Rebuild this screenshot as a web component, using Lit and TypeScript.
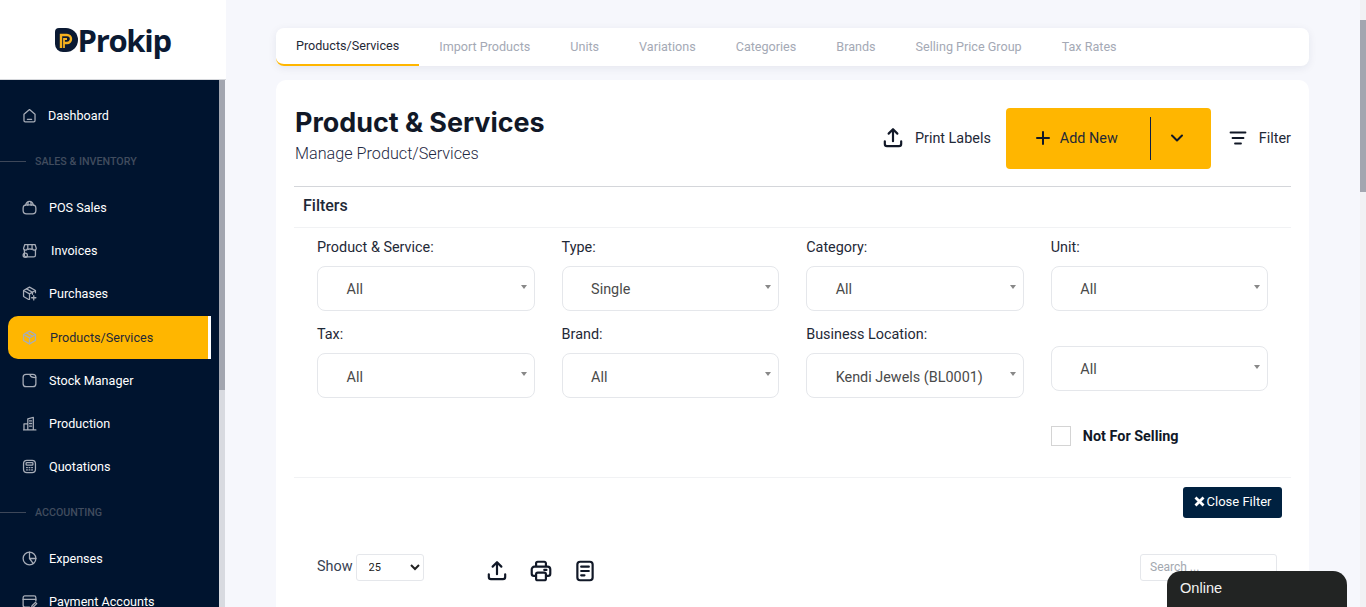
import { LitElement, html, css, svg } from "lit";
import { customElement } from "lit/decorators.js";

const icons: Record<string, unknown> = {
  home: svg`<path d="M3.5 8.5 10 3l6.500 5.500V16a1.500 1.500 0 0 1-1.500 1.500H5A1.500 1.500 0 0 1 3.500 16z"/><path d="M7.500 14.500h5"/>`,
  pos: svg`<rect x="2.500" y="7" width="15" height="10.500" rx="4"/><path d="M5.500 7.500C6 4 8 2.800 10 2.800s4 1.200 4.500 4.700M8 7.500 8.500 3M12 7.500 11.500 3"/>`,
  inv: svg`<path d="M4 9v6.500A2 2 0 0 0 6 17.500h9a2 2 0 0 0 2-2V9"/><path d="M3 7.500 4.500 3h12L18 7.500a2.300 2.300 0 0 1-4.500.5 2.500 2.500 0 0 1-3 0 2.500 2.500 0 0 1-3 0A2.300 2.300 0 0 1 3 7.500zM8 3v5M13 3v5"/><circle cx="5" cy="15.500" r="2.500"/>`,
  pur: svg`<path d="M17 9V6.500L10 2.500 3 6.500v7l6 3.500"/><path d="M3.500 6.800 10 10.500l6.500-3.700M10 10.500V17M6.500 4.500l7 4v2.500"/><path d="M15 12.500v5M12.500 15h5"/>`,
  box: svg`<path d="M10 2.500 17 6.500v7l-7 4-7-4v-7z"/><path d="M3.300 6.700 10 10.500l6.700-3.800M10 10.500v7M6.500 4.500l7 4"/>`,
  stock: svg`<rect x="2.500" y="2.800" width="15" height="14.500" rx="3.500"/><path d="M10.500 3c.3 2 2 3.500 6.800 3.500"/>`,
  prod: svg`<path d="M3 17.500h14.500M3.500 17.500V10.500H8M8 17.500V4.500L14.500 2.800V17.500"/><path d="M10 7h2.500M10 10h2.500M10 13h2.500"/>`,
  quot: svg`<rect x="3" y="2.800" width="14" height="14.500" rx="4"/><rect x="6" y="5.500" width="8" height="3" rx=".8"/><path d="M6.500 11.200h1M9.500 11.200h1M12.500 11.200h1M6.500 14h1M9.500 14h1M12.500 14h1"/>`,
  exp: svg`<circle cx="10" cy="10" r="7.500"/><path d="M10 2.500V10h7.500M10 10l4.500 6"/>`,
  pay: svg`<path d="M17.500 9.500V5.500a2 2 0 0 0-2-2h-11a2 2 0 0 0-2 2v9a2 2 0 0 0 2 2H10"/><path d="M2.500 7.500h15M12.500 17l.5-2 4-4 1.500 1.500-4 4z"/>`,
};

type Item = { label?: string; icon?: string; section?: string; active?: boolean; pad?: boolean };
const nav: Item[] = [
  { label: "Dashboard", icon: "home" },
  { section: "SALES & INVENTORY" },
  { label: "POS Sales", icon: "pos" },
  { label: "Invoices", icon: "inv", pad: true },
  { label: "Purchases", icon: "pur" },
  { label: "Products/Services", icon: "box", active: true },
  { label: "Stock Manager", icon: "stock" },
  { label: "Production", icon: "prod" },
  { label: "Quotations", icon: "quot" },
  { section: "ACCOUNTING" },
  { label: "Expenses", icon: "exp" },
  { label: "Payment Accounts", icon: "pay" },
];

const tabs = ["Products/Services", "Import Products", "Units", "Variations", "Categories", "Brands", "Selling Price Group", "Tax Rates"];

const upload = svg`<path d="M3.500 14v2.500A2 2 0 0 0 5.500 18.500h11a2 2 0 0 0 2-2V14M11 14V3.500M7 7l4-4 4 4"/>`;

@customElement("app-root")
export class AppRoot extends LitElement {
  static styles = css`
    :host { display: flex; width: 1366px; height: 607px; overflow: hidden; position: relative; background: #f6f7fc; font-family: Roboto, sans-serif; color: #0f172a; }
    * { box-sizing: border-box; }
    .side { width: 226px; flex: none; display: flex; flex-direction: column; height: 607px; background: #f6f7fc; }
    .logo { height: 80px; flex: none; background: #fff; border-bottom: 1px solid #d6d8dc; display: flex; align-items: center; padding: 0 0 0 54px; }
    .logo svg { flex: none; }
    .logo span { font-family: "Open Sans", sans-serif; font-weight: 700; font-size: 31px; letter-spacing: -1.300px; color: #0b1a33; margin-left: -0.500px; line-height: 1; position: relative; top: 1px; }
    .sidebody { flex: 1; display: flex; min-height: 0; }
    .nav { width: 219px; flex: none; background: #00142f; padding-top: 14px; overflow: hidden; }
    .track { width: 6px; flex: none; background: #d8dae0; }
    .track i { display: block; height: 310px; background: #a3a6b0; }
    .row { height: 43px; display: flex; align-items: center; padding-left: 21px; color: #fff; font-size: 12.600px; font-weight: 400; }
    .row svg { width: 17px; height: 17px; fill: none; stroke: #a7adb8; stroke-width: 1.500; stroke-linecap: round; stroke-linejoin: round; flex: none; margin-right: 11px; }
    .row.dash svg { margin-right: 10px; }
    .row.pad span { margin-left: 2px; }
    .row.active { background: #ffb600; color: #1f2937; height: 43px; width: 203px; margin: 1px 0 0 8px; padding-left: 13px; border-radius: 10px 0 0 10px; border-right: 3px solid #fff; }
    .row.active svg { margin-right: 12px; }
    .sec { height: 49px; display: flex; align-items: center; font-size: 10.700px; font-weight: 500; color: #414c5e; }
    .sec::before { content: ""; width: 26px; height: 1px; background: #3d4759; margin-right: 9px; }
    .main { flex: 1; padding: 28px 57px 0 50px; min-width: 0; }
    .tabs { height: 38px; background: #fff; border-radius: 8px; box-shadow: 0 2px 8px rgba(30, 40, 80, .08); display: flex; margin-bottom: 14px; }
    .tab { padding: 0 20px; font-size: 12.600px; line-height: 38px; color: #a4a9b5; white-space: nowrap; height: 38px; font-weight: 400; }
    .tab.on { color: #1f2937; border-bottom: 2px solid #ffb600; border-radius: 0 0 0 8px; line-height: 35px; }
    .card { background: #fff; border-radius: 10px 10px 0 0; padding: 28px 18px 0; height: 560px; }
    .head { display: flex; align-items: flex-start; height: 79px; border-bottom: 1px solid #d4d6da; }
    .titles { flex: 1; }
    h1 { margin: 0; font: 700 26.900px/28px Inter, sans-serif; color: #111827; padding-left: 1px; }
    .sub { font-weight: 300; font-size: 16.200px; line-height: 20px; margin-top: 8px; color: #1f2a44; padding-left: 1px; }
    .act { display: flex; align-items: center; font-size: 14.400px; color: #1f2937; height: 61px; padding-bottom: 1px; }
    .act svg, .tools svg { fill: none; stroke: #111827; stroke-width: 2; stroke-linecap: round; stroke-linejoin: round; flex: none; }
    .print svg { margin-right: 10px; width: 24px; height: 24px; }
    .add { width: 205px; height: 61px; margin-left: 15px; background: #ffb600; border-radius: 4px; display: flex; align-items: center; padding-left: 29px; color: #1f2937; }
    .add .lbl { margin-left: 9px; width: 90px; }
    .add .bar { width: 1px; height: 43px; background: #0b1f4b; }
    .add .chev { margin-left: 19px; }
    .filter { margin-left: 17px; }
    .filter svg { margin-right: 11px; stroke-width: 1.800; }
    .ftitle { height: 41px; border-bottom: 1px solid #f1f2f4; padding: 0 0 4px 9px; display: flex; align-items: center; font-size: 16px; font-weight: 500; color: #1f2937; }
    .grid { display: grid; grid-template-columns: repeat(4, 217.500px); column-gap: 27.100px; padding: 11px 0 0 23px; }
    .f { height: 87px; }
    .f label { display: block; font-size: 14.400px; line-height: 18px; color: #1f2937; margin-bottom: 9px; }
    .sel { height: 45px; border: 1px solid #e5e7eb; border-radius: 8px; display: flex; align-items: center; padding: 1px 10px 0 28.500px; font-size: 14.400px; color: #4a4a4a; position: relative; }
    .sel.low { padding-top: 3px; }
    .sel::after { content: ""; position: absolute; right: 7px; top: 18px; border: 3.500px solid transparent; border-top: 4px solid #888; border-bottom: 0; }
    .f.nolabel { padding-top: 20px; }
    .chk { display: flex; align-items: center; grid-column: 4; margin-top: 13px; height: 20px; }
    .chk i { width: 20px; height: 20px; border: 1px solid #d4d4d4; display: block; margin-right: 12px; }
    .chk b { font-size: 14.400px; font-weight: 700; color: #111827; }
    .fdiv { height: 1px; background: #f1f2f4; margin-top: 31px; }
    .closerow { display: flex; justify-content: flex-end; padding: 9px 9px 0 0; }
    .close { width: 99px; height: 31px; background: #002140; color: #fff; border-radius: 3px; font-size: 13px; font-weight: 400; display: flex; align-items: center; justify-content: center; gap: 2px; padding-bottom: 2px; }
    .close svg { width: 11px; height: 11px; fill: none; stroke: #fff; stroke-width: 2.800; }
    .tools { display: flex; align-items: center; margin-top: 36px; padding-left: 23px; height: 27px; }
    .tools .show { font-size: 14.400px; color: #374151; margin-right: 3px; position: relative; top: -1px; }
    select { width: 68px; height: 27px; border: 1px solid #e5e7eb; border-radius: 3px; background: #fff; font: 11px Roboto, sans-serif; padding-left: 8px; color: #222; }
    .ic { display: flex; margin-left: 61px; gap: 20px; position: relative; top: 3px; }
    .search { margin-left: auto; margin-right: 14px; width: 137px; height: 27px; border: 1px solid #e5e7eb; border-radius: 3px; font-size: 12px; color: #a3a8b0; padding: 5px 9px; }
    .vbar { width: 6px; background: #f1f1f4; position: absolute; right: 0; top: 0; bottom: 0; }
    .vbar i { display: block; height: 172px; background: #a3a6b0; margin-top: 20px; }
    .chat { position: absolute; left: 1167px; top: 571px; width: 180px; height: 36px; background: #222423; border-radius: 14px 14px 0 0; color: #f2f2f2; font: 14.600px/34px "Liberation Sans", sans-serif; padding-left: 13px; }
  `;

  render() {
    const field = (l: string, v: string, low = false) =>
      html`<div class="f"><label>${l}</label><div class="sel ${low ? "low" : ""}">${v}</div></div>`;
    return html`
      <aside class="side">
        <div class="logo">
          <svg width="24" height="24" viewBox="0 0 24 24"><path d="M1 4a4 4 0 0 1 4-4h7a12 12 0 0 1 0 24H9a8 8 0 0 1-8-8z" fill="#0b1a33"/><path d="M7 20V7h6a3.500 3.500 0 0 1 0 8h-3" fill="none" stroke="#f5b11f" stroke-width="2.400"/><path d="M10 20v-9h3" fill="none" stroke="#f5b11f" stroke-width="1.800"/></svg>
          <span>Prokip</span>
        </div>
        <div class="sidebody">
          <nav class="nav">
            ${nav.map((n) =>
              n.section
                ? html`<div class="sec">${n.section}</div>`
                : html`<div class="row ${n.active ? "active" : ""} ${n.pad ? "pad" : ""} ${n.icon === "home" ? "dash" : ""}">
                    <svg viewBox="0 0 20 20">${icons[n.icon!]}</svg><span>${n.label}</span>
                  </div>`
            )}
          </nav>
          <div class="track"><i></i></div>
        </div>
      </aside>
      <main class="main">
        <div class="tabs">${tabs.map((t, i) => html`<div class="tab ${i === 0 ? "on" : ""}">${t}</div>`)}</div>
        <section class="card">
          <div class="head">
            <div class="titles"><h1>Product &amp; Services</h1><div class="sub">Manage Product/Services</div></div>
            <div class="act print"><svg viewBox="0 0 22 22">${upload}</svg>Print Labels</div>
            <div class="act add">
              <svg width="16" height="16" viewBox="0 0 16 16"><path d="M8 2v12M2 8h12"/></svg>
              <span class="lbl">Add New</span><span class="bar"></span>
              <svg class="chev" width="14" height="14" viewBox="0 0 14 14"><path d="M2 4.500 7 9.500l5-5"/></svg>
            </div>
            <div class="act filter"><svg width="20" height="20" viewBox="0 0 20 20"><path d="M2.500 4.500h15M4.500 10h11M7 15.500h6"/></svg>Filter</div>
          </div>
          <div class="ftitle">Filters</div>
          <div class="grid">
            ${field("Product & Service:", "All")}${field("Type:", "Single")}${field("Category:", "All")}${field("Unit:", "All")}
            ${field("Tax:", "All", true)}${field("Brand:", "All", true)}${field("Business Location:", "Kendi Jewels (BL0001)", true)}
            <div class="f nolabel"><div class="sel">All</div></div>
            <div class="chk"><i></i><b>Not For Selling</b></div>
          </div>
          <div class="fdiv"></div>
          <div class="closerow"><div class="close"><svg viewBox="0 0 11 11"><path d="M1.500 1.500l8 8M9.500 1.500l-8 8"/></svg>Close Filter</div></div>
          <div class="tools">
            <span class="show">Show</span>
            <select><option>25</option></select>
            <div class="ic">
              <svg width="24" height="24" viewBox="0 0 22 22">${upload}</svg>
              <svg width="24" height="24" viewBox="0 0 22 22"><path d="M6.500 7V4a1.500 1.500 0 0 1 1.500-1.500h6A1.500 1.500 0 0 1 15.500 4v3M6 15.500H4.500a2 2 0 0 1-2-2V9.500A2.500 2.500 0 0 1 5 7h12a2.500 2.500 0 0 1 2.500 2.500v4a2 2 0 0 1-2 2H16"/><rect x="6.500" y="12.500" width="9" height="7" rx="1.500"/><path d="M14 10h2"/></svg>
              <svg width="24" height="24" viewBox="0 0 22 22"><rect x="4" y="2.500" width="14" height="17" rx="2.500"/><path d="M7.500 7h7M7.500 11h7M7.500 15h3"/></svg>
            </div>
            <div class="search">Search ...</div>
          </div>
        </section>
      </main>
      <div class="vbar"><i></i></div>
      <div class="chat">Online</div>
    `;
  }
}
